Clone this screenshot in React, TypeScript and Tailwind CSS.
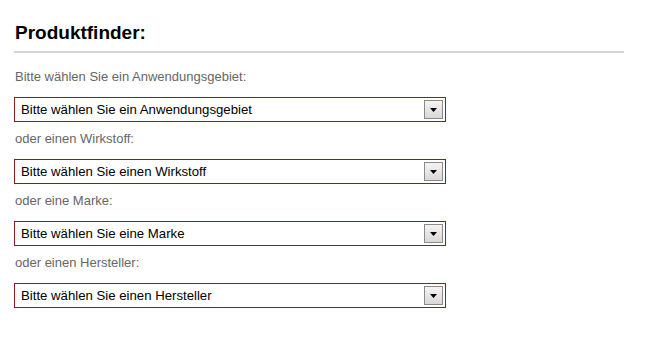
import React from "react";

const groups = [
  { label: "Bitte wählen Sie ein Anwendungsgebiet:", placeholder: "Bitte wählen Sie ein Anwendungsgebiet" },
  { label: "oder einen Wirkstoff:", placeholder: "Bitte wählen Sie einen Wirkstoff" },
  { label: "oder eine Marke:", placeholder: "Bitte wählen Sie eine Marke" },
  { label: "oder einen Hersteller:", placeholder: "Bitte wählen Sie einen Hersteller" },
];

function FakeSelect({ text }: { text: string }) {
  return (
    <div className="flex h-[25px] w-[432px] items-center justify-between border border-[#8e1c1c] bg-white pl-[6px] pr-[2px]">
      <span className="text-[13.2px] leading-none text-black">{text}</span>
      <span className="flex h-[19px] w-[19px] items-center justify-center border border-[#8a8a8a] bg-gradient-to-b from-[#f4f4f4] to-[#d8d8d8]">
        <svg width="7" height="4" viewBox="0 0 7 4">
          <path d="M0 0h7L3.5 4z" fill="#000" />
        </svg>
      </span>
    </div>
  );
}

export default function App() {
  return (
    <div
      className="h-[352px] w-[650px] bg-white pl-[14px] pt-[22px]"
      style={{ fontFamily: '"Liberation Sans", Arial, sans-serif' }}
    >
      <h1 className="pl-[1px] text-[19px] font-bold leading-[22px] text-black">Produktfinder:</h1>
      <div className="mt-[7px] h-[2px] w-[610px] bg-[#d4d4d4]" />
      <div className="mt-[16px] flex flex-col">
        {groups.map((g) => (
          <div key={g.label} className="flex h-[62px] flex-col">
            <div className="h-[28px] pl-[1px] text-[13px] leading-[16px] text-[#666]">{g.label}</div>
            <FakeSelect text={g.placeholder} />
          </div>
        ))}
      </div>
    </div>
  );
}
